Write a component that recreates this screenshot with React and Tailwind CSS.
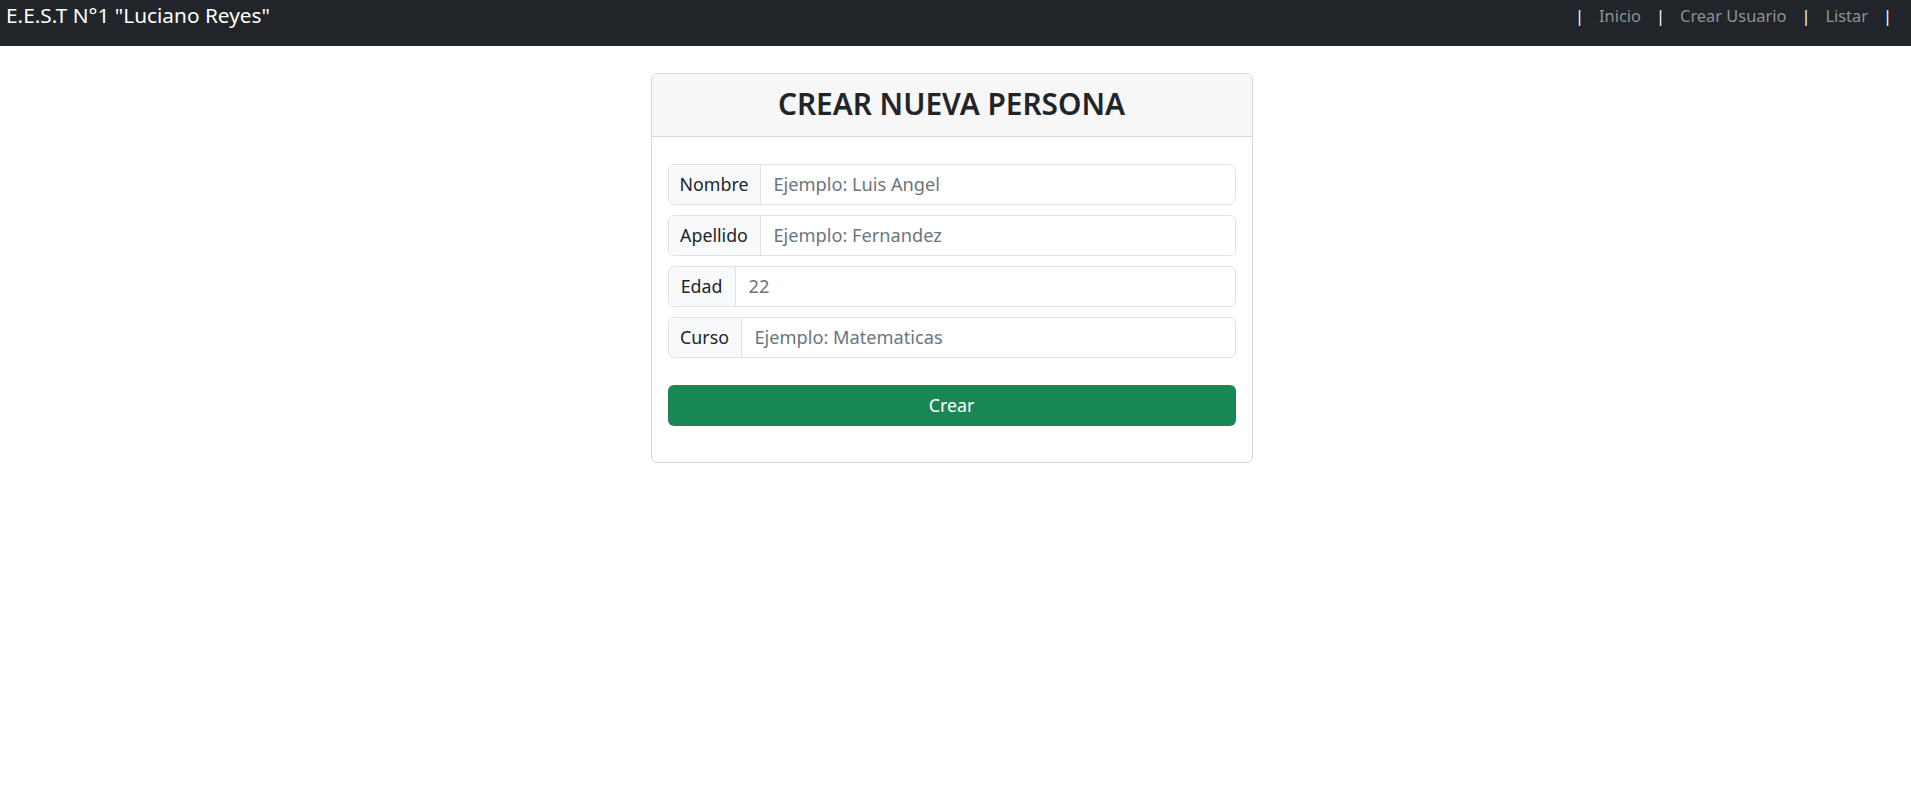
import React from "react";

const fields = [
  { label: "Nombre", placeholder: "Ejemplo: Luis Angel", w: "w-[92px]" },
  { label: "Apellido", placeholder: "Ejemplo: Fernandez", w: "w-[92px]" },
  { label: "Edad", placeholder: "22", w: "w-[67px]" },
  { label: "Curso", placeholder: "Ejemplo: Matematicas", w: "w-[73px]" },
];

export default function App() {
  return (
    <div className="min-h-screen bg-white font-['Noto_Sans',sans-serif] text-[#212529]">
      <nav className="h-[46px] bg-[#212529] flex items-start justify-between">
        <span className="pl-[6px] text-[20.8px] leading-[30px] text-white">
          E.E.S.T N°1 "Luciano Reyes"
        </span>
        <div className="flex items-center pr-[19px] text-[16.4px] leading-[32px] text-[#8e9194]">
          <span className="text-white">|</span>
          <a className="px-[15px]">Inicio</a>
          <span className="text-white">|</span>
          <a className="px-[15px]">Crear Usuario</a>
          <span className="text-white">|</span>
          <a className="px-[15px]">Listar</a>
          <span className="text-white">|</span>
        </div>
      </nav>

      <div className="pt-[27px] pr-[8px] flex justify-center">
        <div className="w-[602px] border border-[#d6d6d6] rounded-[6px] overflow-hidden">
          <div className="h-[63px] pb-[3px] bg-[#f7f7f7] border-b border-[#d6d6d6] flex items-center justify-center">
            <h3 className="text-[29.8px] font-semibold leading-none">
              CREAR NUEVA PERSONA
            </h3>
          </div>
          <div className="px-[16px] pt-[27px] pb-[36px]">
            <div className="flex flex-col gap-[10px]">
              {fields.map((f) => (
                <div
                  key={f.label}
                  className="h-[41px] flex border border-[#dee2e6] rounded-[6px] text-[17.8px]"
                >
                  <span
                    className={`${f.w} shrink-0 flex items-center justify-center bg-[#f8f9fa] border-r border-[#dee2e6] rounded-l-[6px]`}
                  >
                    {f.label}
                  </span>
                  <input
                    className="flex-1 min-w-0 px-[13px] text-[18.2px] outline-none rounded-r-[6px] placeholder:text-[#6c757d]"
                    placeholder={f.placeholder}
                  />
                </div>
              ))}
            </div>
            <button className="mt-[27px] w-full h-[41px] bg-[#198754] text-white text-[17.8px] rounded-[6px]">
              Crear
            </button>
          </div>
        </div>
      </div>
    </div>
  );
}
